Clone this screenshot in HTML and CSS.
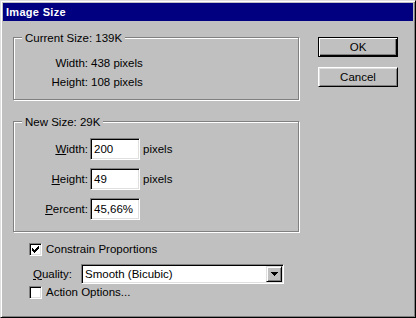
FILE: index.html
```html
<!DOCTYPE html>
<html>
<head>
<meta charset="utf-8">
<link rel="stylesheet" href="styles.css">
</head>
<body>
<div class="window">
  <div class="titlebar">Image Size</div>
  <div class="body">
    <div class="left">
      <div class="group g1">
        <span class="legend">Current Size: 139K</span>
        <div class="info">
          <span class="lbl">Width:</span><span>438 pixels</span>
          <span class="lbl">Height:</span><span>108 pixels</span>
        </div>
      </div>
      <div class="group g2">
        <span class="legend">New Size: 29K</span>
        <div class="fields">
          <div class="field"><span class="lbl"><u>W</u>idth:</span><div class="input">200</div><span class="unit">pixels</span></div>
          <div class="field"><span class="lbl"><u>H</u>eight:</span><div class="input">49</div><span class="unit">pixels</span></div>
          <div class="field"><span class="lbl"><u>P</u>ercent:</span><div class="input">45,66%</div></div>
        </div>
      </div>
      <div class="check-row">
        <span class="checkbox"><svg class="mark" width="7" height="7" viewBox="0 0 7 7"><path d="M6 0h1v1h-1zM5 1h2v1h-2zM0 2h1v1h-1zM4 2h3v1h-3zM0 3h2v1h-2zM3 3h3v1h-3zM0 4h5v1h-5zM1 5h3v1h-3zM2 6h1v1h-1z" fill="#000"/></svg></span>
        <span>Constrain Proportions</span>
      </div>
      <div class="quality-row">
        <span class="qlabel"><u>Q</u>uality:</span>
        <div class="select">
          <span class="sel-text">Smooth (Bicubic)</span>
          <span class="sel-btn"><svg class="mark" width="7" height="4" viewBox="0 0 7 4"><path d="M0 0h7v1h-7zM1 1h5v1h-5zM2 2h3v1h-3zM3 3h1v1h-1z" fill="#000"/></svg></span>
        </div>
      </div>
      <div class="check-row action">
        <span class="checkbox"></span>
        <span>Action Options...</span>
      </div>
    </div>
    <div class="buttons">
      <div class="btn default">OK</div>
      <div class="btn">Cancel</div>
    </div>
  </div>
</div>
</body>
</html>
```
FILE: styles.css
```css
* { box-sizing: border-box; }
html, body { margin: 0; padding: 0; }
body {
  width: 416px;
  height: 318px;
  font-family: "Liberation Sans", Arial, sans-serif;
  font-size: 11.5px;
  line-height: 13px;
  color: #000;
  background: #c0c0c0;
}
.window {
  width: 416px;
  height: 318px;
  background: #c0c0c0;
  border: 1px solid;
  border-color: #dfdfdf #000 #000 #dfdfdf;
  box-shadow: inset 1px 1px #fff, inset -1px -1px #808080;
  padding: 2px;
}
.titlebar {
  height: 18px;
  background: #000080;
  color: #fff;
  font-size: 11px;
  font-weight: bold;
  line-height: 18px;
  padding-left: 3px;
  letter-spacing: 0.3px;
}
.body {
  display: flex;
  padding: 16px 0 0 10px;
}
.left { width: 286px; }
.group {
  position: relative;
  border: 1px solid #808080;
  box-shadow: inset 1px 1px #fff, 1px 1px #fff;
}
.g1 { height: 63px; }
.g2 { height: 111px; margin-top: 21px; }
.legend {
  position: absolute;
  top: -6px;
  left: 8px;
  padding: 0 3px;
  background: #c0c0c0;
}
.info {
  display: grid;
  grid-template-columns: 74px auto;
  column-gap: 3px;
  row-gap: 6px;
  padding-top: 19px;
}
.lbl { text-align: right; }
.fields {
  display: flex;
  flex-direction: column;
  gap: 8px;
  padding-top: 16px;
}
.field {
  display: flex;
  align-items: center;
  height: 22px;
}
.field .lbl { width: 74px; }
.input {
  width: 50px;
  height: 22px;
  margin-left: 2px;
  background: #fff;
  border: 1px solid;
  border-color: #808080 #fff #fff #808080;
  box-shadow: inset 1px 1px #000, inset -1px -1px #dfdfdf;
  display: flex;
  align-items: center;
  padding-left: 3px;
}
.unit { margin-left: 3px; }
.check-row {
  display: flex;
  align-items: center;
  height: 13px;
  padding-left: 16px;
  margin-top: 11px;
}
.check-row.action { margin-top: 2px; }
.checkbox {
  width: 13px;
  height: 13px;
  flex: none;
  background: #fff;
  border: 1px solid;
  border-color: #808080 #fff #fff #808080;
  box-shadow: inset 1px 1px #000, inset -1px -1px #dfdfdf;
  margin-right: 4px;
  display: flex;
  align-items: center;
  justify-content: center;
}
.mark { display: block; shape-rendering: crispEdges; }
.quality-row {
  display: flex;
  align-items: center;
  height: 20px;
  margin-top: 8px;
  padding-left: 20px;
}
.qlabel { width: 48px; }
.select {
  width: 203px;
  height: 20px;
  background: #fff;
  border: 1px solid;
  border-color: #808080 #fff #fff #808080;
  box-shadow: inset 1px 1px #000, inset -1px -1px #dfdfdf;
  display: flex;
  align-items: center;
  padding: 1px;
}
.sel-text { flex: 1; padding-left: 2px; }
.sel-btn {
  width: 16px;
  height: 16px;
  background: #c0c0c0;
  border: 1px solid;
  border-color: #dfdfdf #000 #000 #dfdfdf;
  box-shadow: inset 1px 1px #fff, inset -1px -1px #808080;
  display: flex;
  align-items: center;
  justify-content: center;
}
.buttons {
  margin-left: 19px;
  display: flex;
  flex-direction: column;
  gap: 10px;
}
.btn {
  width: 80px;
  height: 20px;
  display: flex;
  align-items: center;
  justify-content: center;
  border: 1px solid;
  border-color: #fff #000 #000 #fff;
  box-shadow: inset 1px 1px #dfdfdf, inset -1px -1px #808080;
}
.btn.default {
  border-color: #000;
  box-shadow: inset 1px 1px #fff, inset -1px -1px #000, inset -2px -2px #808080;
}
```
